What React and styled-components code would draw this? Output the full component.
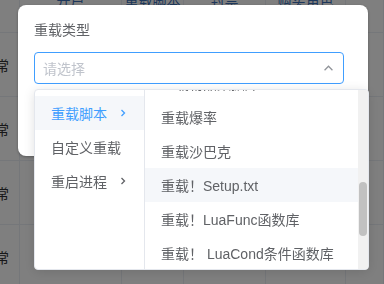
import React, { useEffect, useRef, useState } from 'react';
import styled, { createGlobalStyle } from 'styled-components';

const GlobalStyle = createGlobalStyle`
  html, body {
    margin: 0;
    padding: 0;
    width: 384px;
    height: 284px;
    overflow: hidden;
    background: #fff;
  }
  body {
    font-family: "Liberation Sans", "Noto Sans CJK SC", sans-serif;
    font-size: 14px;
    color: #606266;
  }
`;

const columns = '20px 102px 62px 82px 80px 38px';

const Table = styled.div`
  margin-top: -33px;
  display: grid;
  grid-template-columns: ${columns};
`;

const Cell = styled.div`
  height: ${(p) => (p.$head ? '65px' : '63px')};
  border-bottom: 1px solid #ebeef5;
  border-right: 1px solid #ebeef5;
  display: flex;
  align-items: center;
  justify-content: ${(p) => (p.$first ? 'flex-end' : 'center')};
  padding-right: ${(p) => (p.$first ? '10px' : '0')};
  white-space: nowrap;
  overflow: hidden;
  color: ${(p) => (p.$head ? '#3b6fb6' : '#303133')};
  font-size: 14px;
`;

const Overlay = styled.div`
  position: fixed;
  inset: 0;
  background: rgba(0, 0, 0, 0.5);
`;

const Dialog = styled.div`
  margin: 5px 0 0 18px;
  width: 350px;
  height: 151px;
  box-sizing: border-box;
  background: #fff;
  border-radius: 8px;
  box-shadow: 0 1px 3px rgba(0, 0, 0, 0.3);
  padding: 15px 24px 0 16px;
`;

const Label = styled.div`
  font-size: 14px;
  line-height: 20px;
  color: #606266;
  margin-bottom: 12px;
`;

const SelectWrap = styled.div`
  position: relative;
`;

const Input = styled.div`
  height: 32px;
  box-sizing: border-box;
  border: 1px solid #409eff;
  border-radius: 4px;
  display: flex;
  align-items: center;
  justify-content: space-between;
  padding: 0 10px 0 8px;
  color: #c0c4cc;
  font-size: 14px;
`;

const Dropdown = styled.div`
  position: absolute;
  top: 37px;
  left: 0;
  width: 335px;
  height: 181px;
  box-sizing: border-box;
  background: #fff;
  border: 1px solid #e4e7ed;
  border-radius: 4px;
  box-shadow: 0 2px 12px rgba(0, 0, 0, 0.12);
  display: flex;
  overflow: hidden;
`;

const Menu = styled.div`
  width: 110px;
  flex: none;
  box-sizing: border-box;
  padding: 6px 0;
  border-right: 1px solid #e4e7ed;
`;

const RightPane = styled.div`
  flex: 1;
  position: relative;
  overflow: hidden;
`;

const List = styled.div`
  height: 100%;
  box-sizing: border-box;
  padding: 6px 0;
  overflow: hidden;
`;

const Track = styled.div`
  position: absolute;
  top: 0;
  right: 0;
  bottom: 0;
  width: 10px;
  background: #f1f1f1;
`;

const Thumb = styled.div`
  position: absolute;
  left: 1px;
  width: 8px;
  border-radius: 4px;
  background: #c1c1c1;
`;

const Item = styled.div`
  height: 34px;
  display: flex;
  align-items: center;
  justify-content: space-between;
  padding: 0 17px 0 16px;
  white-space: pre;
  color: ${(p) => (p.$active ? '#409eff' : '#606266')};
  background: ${(p) => (p.$active || p.$hover ? '#f5f7fa' : 'transparent')};
`;

const Chevron = ({ dir = 'right', color = '#606266', size = 8 }) => (
  <svg width={size} height={size} viewBox="0 0 8 8">
    {dir === 'right' ? (
      <polyline points="2.5,1 5.5,4 2.5,7" fill="none" stroke={color} strokeWidth="1.3" />
    ) : (
      <polyline points="0.5,5.5 4,2 7.5,5.5" fill="none" stroke={color} strokeWidth="1.1" />
    )}
  </svg>
);

const headers = ['', '开户', '重载脚本', '封禁', '购买角色', ''];
const rows = ['正常', '正常', '正常', '正常', '正常'];

const rightItems = [
  '重载NPC',
  '重载商店',
  '重载地图',
  '重载怪物',
  '重载物品',
  '重载技能',
  '重载任务',
  '重载称号',
  '重载物品数据库',
  '重载爆率',
  '重载沙巴克',
  '重载！Setup.txt',
  '重载！LuaFunc函数库',
  '重载！ LuaCond条件函数库',
  '重载！LuaQuest任务库',
  '重载！GameData',
  '重载全部',
];

const SCROLL = 302;

const App = () => {
  const listRef = useRef(null);
  const [thumb, setThumb] = useState({ top: 0, height: 0 });

  useEffect(() => {
    const el = listRef.current;
    if (!el) return;
    el.scrollTop = SCROLL;
    const view = el.clientHeight;
    const total = el.scrollHeight;
    const height = Math.round((view * view) / total);
    const top = Math.round((el.scrollTop / (total - view)) * (view - height));
    setThumb({ top, height });
  }, []);

  return (
    <>
      <GlobalStyle />
      <Table>
        {headers.map((h, i) => (
          <Cell key={'h' + i} $head $first={i === 0}>{h}</Cell>
        ))}
        {rows.map((r, ri) =>
          headers.map((_, i) => (
            <Cell key={ri + '-' + i} $first={i === 0}>{i === 0 ? r : ''}</Cell>
          ))
        )}
      </Table>
      <Overlay>
        <Dialog>
          <Label>重载类型</Label>
          <SelectWrap>
            <Input>
              请选择
              <Chevron dir="up" color="#909399" size={9} />
            </Input>
            <Dropdown>
              <Menu>
                <Item $active>
                  重载脚本
                  <Chevron color="#409eff" />
                </Item>
                <Item>自定义重载</Item>
                <Item>
                  重启进程
                  <Chevron />
                </Item>
              </Menu>
              <RightPane>
                <List ref={listRef}>
                  {rightItems.map((t, i) => (
                    <Item key={i} $hover={i === 11}>{t}</Item>
                  ))}
                </List>
                <Track>
                  <Thumb style={{ top: thumb.top, height: thumb.height }} />
                </Track>
              </RightPane>
            </Dropdown>
          </SelectWrap>
        </Dialog>
      </Overlay>
    </>
  );
};

export default App;
